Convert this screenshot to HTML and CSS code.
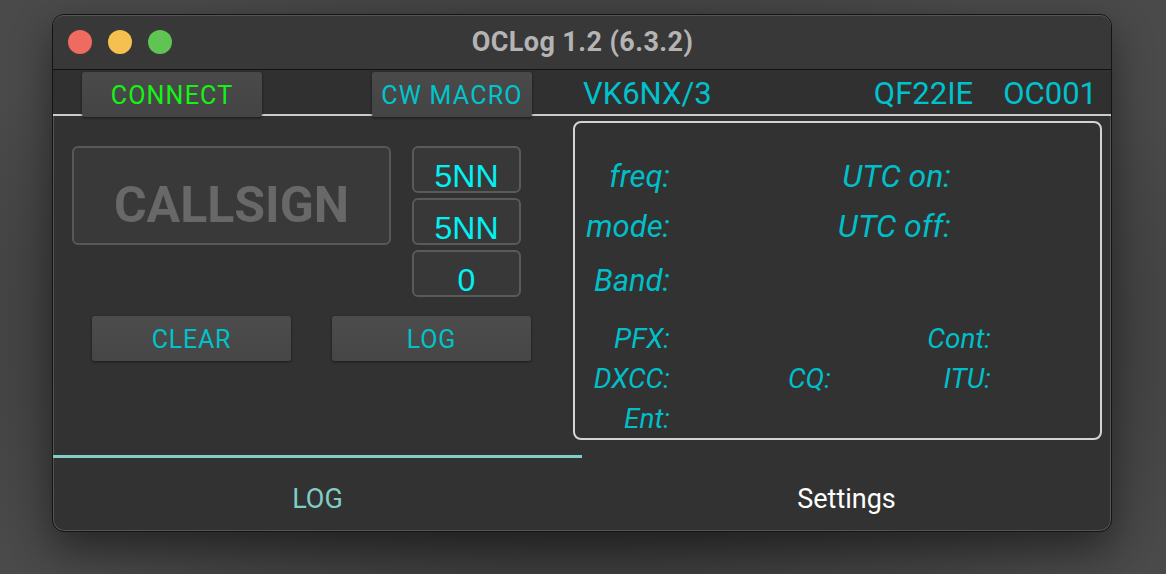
FILE: index.html
```html
<!DOCTYPE html>
<html>
<head>
<meta charset="utf-8">
<title>OCLog</title>
<link rel="stylesheet" href="styles.css">
</head>
<body>
<div class="window">
  <div class="titlebar">
    <div class="lights">
      <span class="light red"></span>
      <span class="light yellow"></span>
      <span class="light green"></span>
    </div>
    <div class="title">OCLog 1.2 (6.3.2)</div>
  </div>
  <div class="toolbar">
    <button class="tbtn connect">CONNECT</button>
    <button class="tbtn macro">CW MACRO</button>
    <span class="call">VK6NX/3</span>
    <span class="grid-sq">QF22IE</span>
    <span class="ref">OC001</span>
  </div>
  <div class="main">
    <div class="left">
      <div class="entry-row">
        <div class="callsign">CALLSIGN</div>
        <div class="reports">
          <div class="rbox">5NN</div>
          <div class="rbox">5NN</div>
          <div class="rbox">0</div>
        </div>
      </div>
      <div class="actions">
        <button class="abtn">CLEAR</button>
        <button class="abtn">LOG</button>
      </div>
    </div>
    <div class="panel">
      <div class="upper">
        <span class="lbl">freq:</span><span class="lbl">UTC on:</span>
        <span class="lbl">mode:</span><span class="lbl">UTC off:</span>
        <span class="lbl">Band:</span><span></span>
      </div>
      <div class="lower">
        <span class="lbl">PFX:</span><span></span><span class="lbl">Cont:</span>
        <span class="lbl">DXCC:</span><span class="lbl">CQ:</span><span class="lbl">ITU:</span>
        <span class="lbl">Ent:</span><span></span><span></span>
      </div>
    </div>
  </div>
  <div class="tabs">
    <div class="tab active">LOG</div>
    <div class="tab">Settings</div>
  </div>
</div>
</body>
</html>
```

FILE: styles.css
```css
* { box-sizing: border-box; }
html, body { margin: 0; padding: 0; }
body {
  width: 1166px;
  height: 574px;
  overflow: hidden;
  background: radial-gradient(ellipse 700px 400px at 580px 330px, #2c2c2c 0%, #3a3a3a 55%, #4a4a4a 100%);
  font-family: Roboto, "Liberation Sans", sans-serif;
  padding: 14px 0 0 52px;
}
.window {
  width: 1060px;
  height: 518px;
  border: 1px solid #141414;
  border-radius: 12px;
  background: #323232;
  box-shadow: inset 0 0 0 1px #555, 0 16px 40px rgba(0,0,0,0.45);
  display: flex;
  flex-direction: column;
  overflow: hidden;
}
.titlebar {
  height: 55px;
  flex: none;
  background: #383838;
  border-bottom: 1px solid #121212;
  display: flex;
  align-items: center;
  position: relative;
  border-radius: 11px 11px 0 0;
  box-shadow: inset 0 1px 0 #555;
}
.lights { display: flex; gap: 16px; padding-left: 15px; }
.light { width: 24px; height: 24px; border-radius: 50%; display: block; }
.red { background: #ef6b60; }
.yellow { background: #f6c050; }
.green { background: #60c453; }
.title {
  position: absolute;
  left: 0; right: 0; top: 0; bottom: 0;
  display: flex; align-items: center; justify-content: center;
  color: #b4b4b4;
  font-weight: 700;
  font-size: 27px;
  letter-spacing: 0.4px;
  padding-left: 1px;
}
.toolbar {
  height: 46px;
  flex: none;
  background: #303030;
  border-bottom: 2px solid #cbcbcb;
  display: flex;
  align-items: flex-start;
  padding-left: 29px;
  padding-right: 14px;
}
.tbtn {
  margin-top: 2px;
  height: 45px;
  border: none;
  border-radius: 3px;
  background: linear-gradient(#4a4a4a, #444);
  box-shadow: 0 1px 3px rgba(0,0,0,0.5);
  font-family: Roboto, sans-serif;
  font-size: 25px;
  letter-spacing: 1.2px;
  position: relative;
  z-index: 1;
  padding: 2px 0 0;
}
.connect { width: 180px; color: #14f414; }
.macro { width: 160px; margin-left: 110px; color: #00c4cc; }
.call, .grid-sq, .ref {
  color: #00c2cc;
  font-size: 31px;
  line-height: 48px;
}
.call { margin-left: 51px; }
.grid-sq { margin-left: auto; }
.ref { margin-left: 30px; }
.main {
  flex: none;
  height: 336px;
  display: flex;
}
.left {
  width: 520px;
  padding: 30px 0 0 19px;
}
.entry-row { display: flex; gap: 21px; }
.callsign {
  width: 319px;
  height: 99px;
  border: 2px solid #585858;
  border-radius: 6px;
  background: #3a393a;
  color: #686868;
  font-weight: 700;
  font-size: 50px;
  display: flex; align-items: center; justify-content: center;
  padding-top: 19px;
}
.reports { display: flex; flex-direction: column; gap: 5px; }
.rbox {
  width: 109px;
  height: 47px;
  border: 2px solid #5a5a5a;
  border-radius: 6px;
  background: #393839;
  color: #00f2f2;
  font-family: "Liberation Sans", Arial, sans-serif;
  font-size: 32px;
  display: flex; align-items: center; justify-content: center;
  padding-top: 14px;
}
.actions {
  display: flex;
  gap: 41px;
  margin-top: 19px;
  padding-left: 20px;
}
.abtn {
  width: 199px;
  height: 45px;
  border: none;
  border-radius: 3px;
  background: linear-gradient(#4c4c4c, #464646);
  box-shadow: 0 1px 3px rgba(0,0,0,0.5);
  color: #00c2ca;
  font-family: Roboto, sans-serif;
  font-size: 25px;
  letter-spacing: 0.8px;
  padding: 2px 0 0;
}
.panel {
  margin-top: 5px;
  width: 529px;
  height: 319px;
  border: 2px solid #d4d4d4;
  border-radius: 8px;
  padding-top: 28px;
}
.lbl {
  color: #00bfc8;
  font-style: italic;
  text-align: right;
  white-space: nowrap;
}
.upper {
  display: grid;
  grid-template-columns: 95px 281px;
  grid-template-rows: 50px 50px 58px;
  font-size: 31px;
  align-items: center;
}
.upper .lbl:nth-child(2), .upper .lbl:nth-child(4) { font-size: 32px; }
.lower {
  display: grid;
  grid-template-columns: 95px 161px 160px;
  grid-template-rows: 40px 40px 40px;
  font-size: 28px;
  align-items: center;
  margin-top: 9px;
}
.tabs {
  flex: 1;
  display: flex;
  margin-top: 3px;
}
.tab {
  flex: 1;
  display: flex;
  align-items: center;
  justify-content: center;
  font-size: 27px;
  font-weight: 400;
  color: #ffffff;
  border-top: 3px solid transparent;
  padding-top: 8px;
}
.tab.active {
  color: #80cdc5;
  border-top-color: #80cfc7;
}
```
